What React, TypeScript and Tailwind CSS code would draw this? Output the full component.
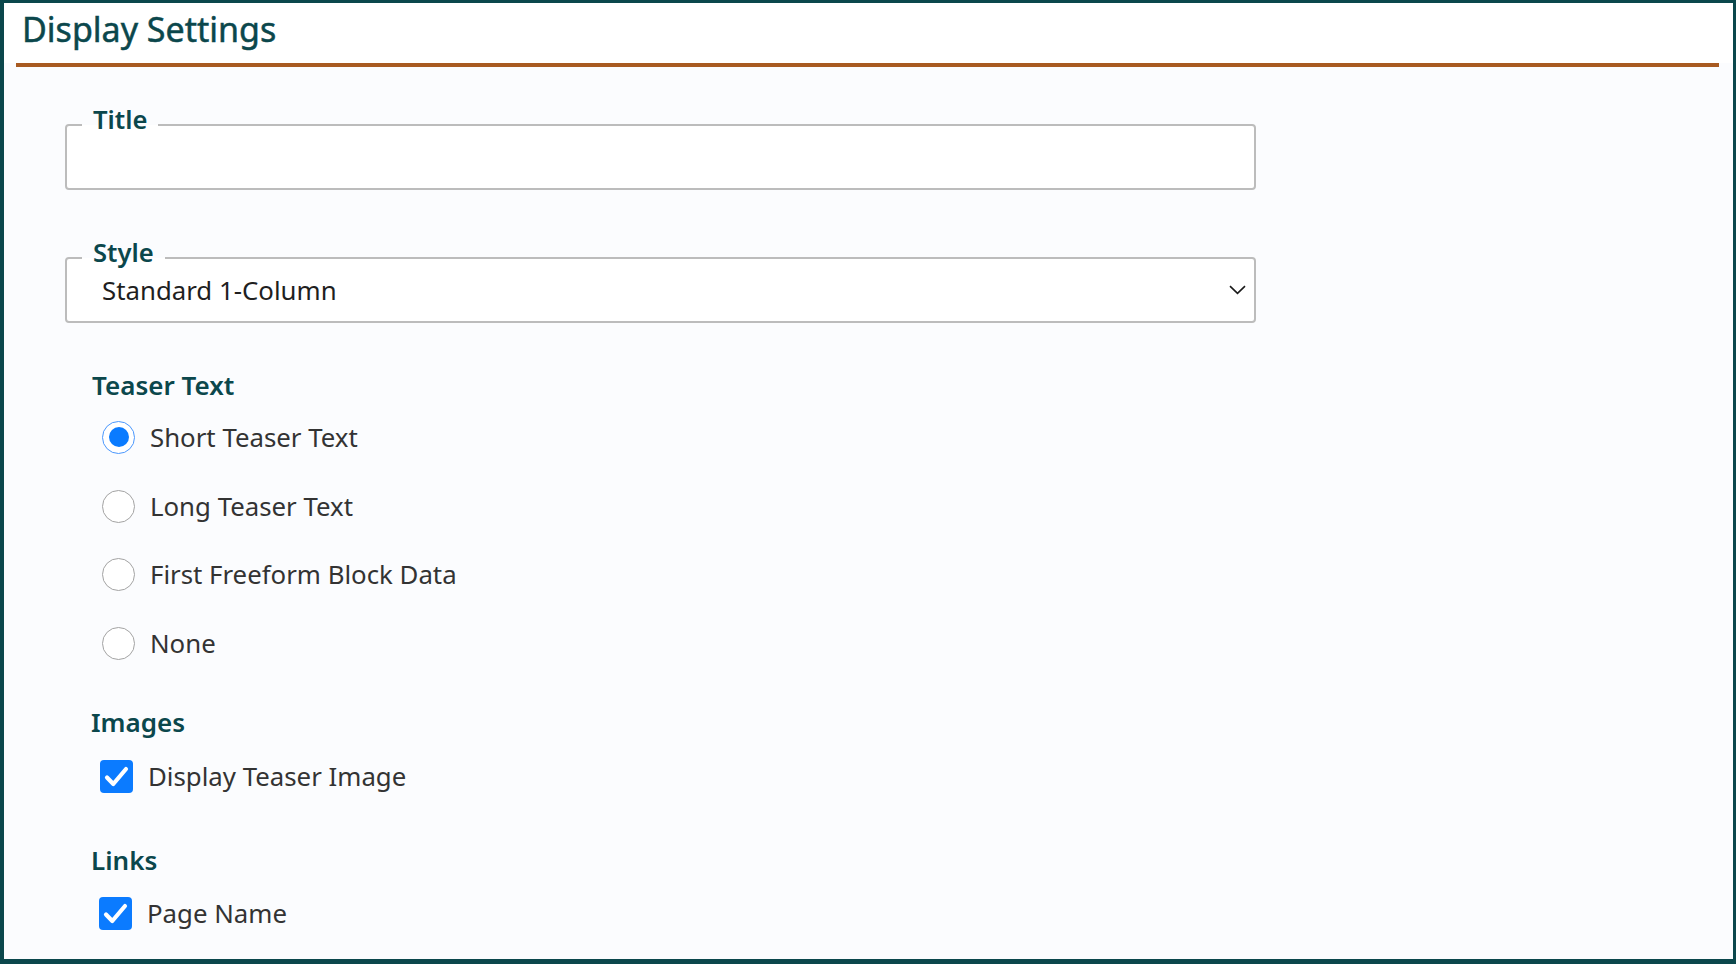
import React from "react";

function Radio({ checked, label }: { checked?: boolean; label: string }) {
  return (
    <div className="flex h-[68.75px] items-center pl-[37px]">
      {checked ? (
        <span className="flex h-[33px] w-[33px] items-center justify-center rounded-full border-[1.5px] border-[#4a97fd] bg-white">
          <span className="h-[20px] w-[20px] rounded-full bg-[#0a7bff]" />
        </span>
      ) : (
        <span className="h-[33px] w-[33px] rounded-full border-[1.5px] border-[#a3a3a3] bg-white" />
      )}
      <span className="ml-[15px] text-[25.8px] leading-[35px] text-[#333333]">{label}</span>
    </div>
  );
}

function Check({ label, shift = 0 }: { label: string; shift?: number }) {
  return (
    <div className={`flex h-[68.75px] items-center ${shift ? "pl-[34px]" : "pl-[35px]"}`}>
      <span className="flex h-[33px] w-[33px] items-center justify-center rounded-[4px] bg-[#0b7bff]">
        <svg width="33" height="33" viewBox="0 0 33 33" fill="none">
          <path d="M7 17.5 L13.3 24 L26 9" stroke="#ffffff" strokeWidth="4.2" strokeLinecap="round" strokeLinejoin="round" />
        </svg>
      </span>
      <span className="ml-[15px] text-[25.8px] leading-[35px] text-[#333333]">{label}</span>
    </div>
  );
}

export default function App() {
  return (
    <div className="h-[964px] w-[1736px] overflow-hidden border-b-[5px] border-l-[4px] border-r-[3px] border-t-[3px] border-[#0b474c] bg-[#fbfcfe] font-['Noto_Sans',sans-serif]">
      <div className="bg-white">
        <h1 className="pl-[18px] pt-[6px] text-[34px] font-normal leading-[40px] text-[#0b474c] [-webkit-text-stroke:0.5px_#0b474c]">Display Settings</h1>
        <div className="pt-[14px]" />
      </div>
      <div className="ml-[12px] mr-[14px] h-[4px] bg-[#a85a21]" />

      <div className="pl-[61px]">
        <div className="relative mt-[57px] h-[66px] w-[1191px] rounded-[4px] border-2 border-[#bcbcbc] bg-white">
          <span className="absolute left-[15px] top-[-19px] bg-[linear-gradient(to_bottom,#fbfcfe_18px,#ffffff_18px)] px-[11px] text-[25.6px] font-semibold leading-[26px] text-[#0b474c]">
            Title
          </span>
        </div>

        <div className="relative mt-[67px] flex h-[66px] w-[1191px] items-center justify-between rounded-[4px] border-2 border-[#bcbcbc] bg-white pl-[35px] pr-[8px]">
          <span className="absolute left-[15px] top-[-19px] bg-[linear-gradient(to_bottom,#fbfcfe_18px,#ffffff_18px)] px-[11px] text-[25.6px] font-semibold leading-[26px] text-[#0b474c]">
            Style
          </span>
          <span className="text-[25.8px] leading-[35px] text-[#1f1f1f]">Standard 1-Column</span>
          <svg width="17" height="10" viewBox="0 0 17 10" fill="none">
            <path d="M1 1.2 L8.5 8.3 L16 1.2" stroke="#1a1a1a" strokeWidth="1.6" />
          </svg>
        </div>

        <div className="ml-[27px] mt-[45px] text-[26px] font-semibold leading-[35px] text-[#0b474c]">Teaser Text</div>
        <Radio checked label="Short Teaser Text" />
        <Radio label="Long Teaser Text" />
        <Radio label="First Freeform Block Data" />
        <Radio label="None" />

        <div className="ml-[26px] mt-[27px] text-[26px] font-semibold leading-[35px] text-[#0b474c]">Images</div>
        <div className="mt-[2px]">
          <Check label="Display Teaser Image" />
        </div>

        <div className="ml-[26px] mt-[32px] text-[26px] font-semibold leading-[35px] text-[#0b474c]">Links</div>
        <div className="mt-[1px]">
          <Check label="Page Name" shift={1} />
        </div>
      </div>
    </div>
  );
}
